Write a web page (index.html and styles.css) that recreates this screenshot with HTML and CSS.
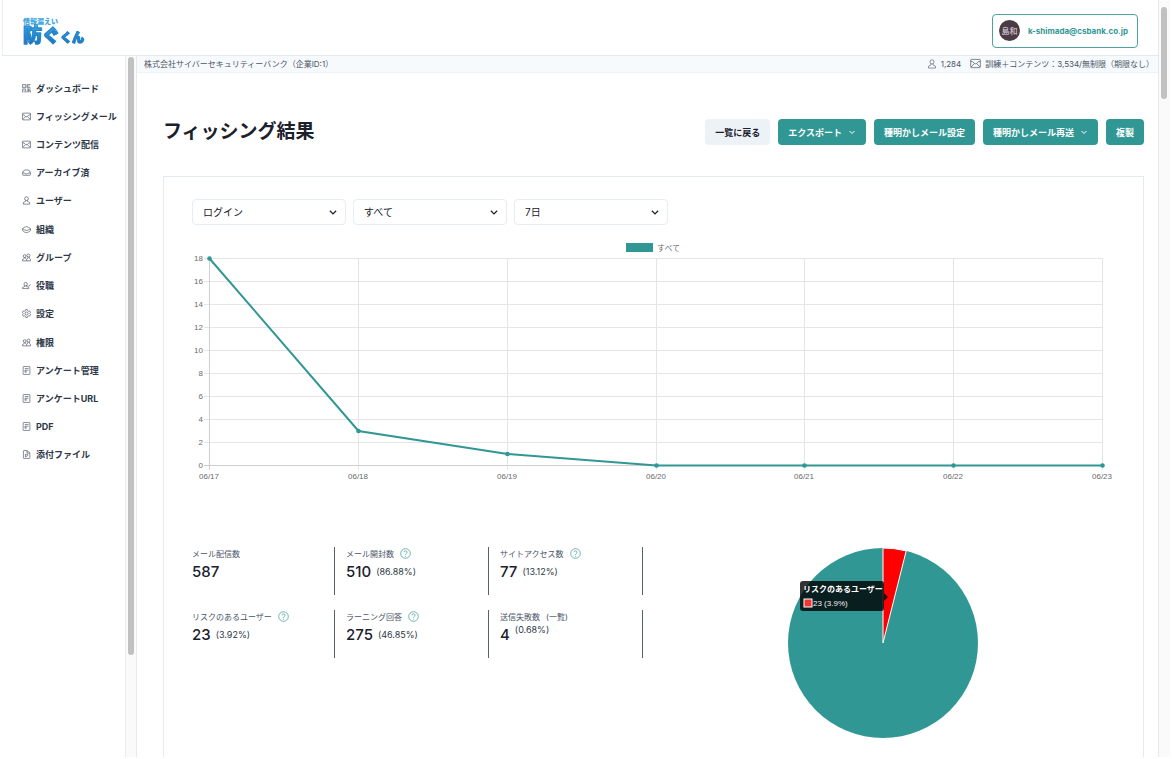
FILE: index.html
```html
<!DOCTYPE html>
<html lang="ja">
<head>
<meta charset="utf-8">
<title>フィッシング結果</title>
<link rel="stylesheet" href="styles.css">
</head>
<body>
<svg class="sprite" aria-hidden="true">
  <symbol id="i-qr" viewBox="0 0 16 16"><path d="M1 1h5.500v5.500H1zM9 6.500V1h6M9 6.500h6M9 3.700h4.500M3.500 3.500v1M1 15V9h5.500v6M3.800 11.500V15M9 15v-2.500M9 9h6M12 9v6M9 12h6M15 12v3"/></symbol>
  <symbol id="i-mail" viewBox="0 0 16 16"><rect x="1" y="2" width="14" height="12" rx="1"/><path d="M1 4.500Q4.500 5 6.500 8q1.500 1 3 0Q11.500 5 15 4.500M1.500 13L6.500 8M14.500 13L9.500 8"/></symbol>
  <symbol id="i-inbox" viewBox="0 0 16 16"><path d="M1 9Q1.500 4 5.500 3.500h5Q14.500 4 15 9v2.500q0 1.500-1.500 1.500h-11Q1 13 1 11.500zM1 9h4l1 1.500h4L11 9h4"/></symbol>
  <symbol id="i-user" viewBox="0 0 16 16"><circle cx="8" cy="4.700" r="3.300"/><path d="M6.300 7.800v1.700L2.500 11.500v3h11v-3L9.700 9.500V7.800"/></symbol>
  <symbol id="i-layers" viewBox="0 0 16 16"><path d="M1 6.500Q4.500 3 8 3t7 3.500Q11.500 9.500 8 9.500T1 6.500v3.500Q4.500 13.500 8 13.500t7-3.500V6.500"/></symbol>
  <symbol id="i-users" viewBox="0 0 16 16"><circle cx="4.800" cy="5.500" r="2.500"/><circle cx="11.500" cy="4.500" r="2.700"/><path d="M4 8v1.500L1 11.500V14h7.500v-2.500L6 9.500V8M10.500 7v2L8.500 11M8.500 14H15v-3L12.800 9V7"/></symbol>
  <symbol id="i-usercheck" viewBox="0 0 16 16"><circle cx="6.500" cy="5.500" r="3"/><path d="M5 8.200v1.300L1 11.500v2h11v-2L8 9.500V8.200M10.500 8l1.500 1.500L15 6"/></symbol>
  <symbol id="i-gear" viewBox="0 0 16 16"><path d="M6.500 1h3l.5 2 1.800 1 2-.6L15 6l-1.200 2L15 10l-1.200 2.600-2-.6-1.800 1-.5 2h-3L6 13l-1.800-1-2 .6L1 10l1.200-2L1 6l1.200-2.600 2 .6L6 3z"/><circle cx="8" cy="8" r="2.700"/></symbol>
  <symbol id="i-doc" viewBox="0 0 16 16"><rect x="2" y="1" width="12" height="14" rx="1"/><path d="M5 4.500h6.500M5 7.500h6.500M5.500 10.500H9M5.500 7.500V12"/></symbol>
  <symbol id="i-file" viewBox="0 0 16 16"><path d="M2.500 2q0-1 1-1H9l5 4.500V14q0 1-1 1h-9.500q-1 0-1-1zM9 1v4.500h5M6 13V7.500h3a1.800 1.800 0 0 1 0 3.500H6"/></symbol>
  <symbol id="i-down" viewBox="0 0 16 16"><path d="M3 6l5 5 5-5"/></symbol>
  <symbol id="i-help" viewBox="0 0 16 16"><circle cx="8" cy="8" r="7"/><path d="M5.800 6.300a2.200 2.200 0 1 1 3.200 2Q8 8.800 8 9.800M8 11.300v1.200"/></symbol>
</svg>

<div class="page">
  <div class="app">
    <header class="header">
      <a class="logo" href="#"><small>情報漏えい</small><span>防<b>ぐ</b><i>くん</i></span></a>
      <button class="account" type="button"><span class="avatar">島和</span>k-shimada@csbank.co.jp</button>
    </header>
    <div class="body">
      <aside class="sidebar">
        <nav class="nav">
          <a href="#"><svg class="icon"><use href="#i-qr"/></svg>ダッシュボード</a>
          <a href="#"><svg class="icon"><use href="#i-mail"/></svg>フィッシングメール</a>
          <a href="#"><svg class="icon"><use href="#i-mail"/></svg>コンテンツ配信</a>
          <a href="#"><svg class="icon"><use href="#i-inbox"/></svg>アーカイブ済</a>
          <a href="#"><svg class="icon"><use href="#i-user"/></svg>ユーザー</a>
          <a href="#"><svg class="icon"><use href="#i-layers"/></svg>組織</a>
          <a href="#"><svg class="icon"><use href="#i-users"/></svg>グループ</a>
          <a href="#"><svg class="icon"><use href="#i-usercheck"/></svg>役職</a>
          <a href="#"><svg class="icon"><use href="#i-gear"/></svg>設定</a>
          <a href="#"><svg class="icon"><use href="#i-users"/></svg>権限</a>
          <a href="#"><svg class="icon"><use href="#i-doc"/></svg>アンケート管理</a>
          <a href="#"><svg class="icon"><use href="#i-doc"/></svg>アンケートURL</a>
          <a href="#"><svg class="icon"><use href="#i-doc"/></svg>PDF</a>
          <a href="#"><svg class="icon"><use href="#i-file"/></svg>添付ファイル</a>
        </nav>
        <div class="track track-side"><div class="thumb"></div></div>
      </aside>
      <main class="main">
        <div class="infobar">
          <span>株式会社サイバーセキュリティーバンク（企業ID:1）</span>
          <div class="usage">
            <span><svg class="icon"><use href="#i-user"/></svg>1,284</span>
            <span><svg class="icon wide"><use href="#i-mail"/></svg>訓練＋コンテンツ：3,534/無制限（期限なし）</span>
          </div>
        </div>
        <div class="content">
          <div class="heading">
            <h1>フィッシング結果</h1>
            <div class="actions">
              <button class="btn plain" type="button">一覧に戻る</button>
              <button class="btn" type="button">エクスポート<svg class="icon"><use href="#i-down"/></svg></button>
              <button class="btn" type="button">種明かしメール設定</button>
              <button class="btn" type="button">種明かしメール再送<svg class="icon"><use href="#i-down"/></svg></button>
              <button class="btn" type="button">複製</button>
            </div>
          </div>
          <section class="card">
            <div class="filters">
              <div class="select"><select aria-label="イベント"><option>ログイン</option></select><svg class="icon"><use href="#i-down"/></svg></div>
              <div class="select"><select aria-label="対象"><option>すべて</option></select><svg class="icon"><use href="#i-down"/></svg></div>
              <div class="select"><select aria-label="期間"><option>7日</option></select><svg class="icon"><use href="#i-down"/></svg></div>
            </div>
            <svg class="line-chart" viewBox="0 0 923 245" role="img" aria-label="すべて">
              <rect class="teal" x="434" y="3" width="27" height="9"/>
              <text x="465" y="11">すべて</text>
              <path class="grid" d="M12 18.500H911M12 41.500H911M12 64.500H911M12 87.500H911M12 110.500H911M12 133.500H911M12 156.500H911M12 179.500H911M12 202.500H911M166.500 18V230M315.500 18V230M464.500 18V230M612.500 18V230M761.500 18V230M910.500 18V230"/>
              <path class="axis" d="M12 225.500H911M17.500 18V230"/>
              <g class="ticks-y">
                <text x="11" y="21">18</text><text x="11" y="44">16</text><text x="11" y="67">14</text><text x="11" y="90">12</text><text x="11" y="113">10</text><text x="11" y="136">8</text><text x="11" y="159">6</text><text x="11" y="182">4</text><text x="11" y="205">2</text><text x="11" y="228">0</text>
              </g>
              <g class="ticks-x">
                <text x="17" y="239">06/17</text><text x="166" y="239">06/18</text><text x="315" y="239">06/19</text><text x="464" y="239">06/20</text><text x="612" y="239">06/21</text><text x="761" y="239">06/22</text><text x="910" y="239">06/23</text>
              </g>
              <polyline class="series" points="17.500,18.500 166.500,191 315.500,214 464.500,225.500 612.500,225.500 761.500,225.500 910.500,225.500"/>
              <g class="teal"><circle cx="17.500" cy="18.500" r="2.300"/><circle cx="166.500" cy="191" r="2.300"/><circle cx="315.500" cy="214" r="2.300"/><circle cx="464.500" cy="225.500" r="2.300"/><circle cx="612.500" cy="225.500" r="2.300"/><circle cx="761.500" cy="225.500" r="2.300"/><circle cx="910.500" cy="225.500" r="2.300"/></g>
            </svg>
            <div class="results">
              <div class="stats">
                <div class="stat"><div class="name">メール配信数</div><div class="value">587</div></div>
                <div class="stat"><div class="name">メール開封数<svg class="icon help"><use href="#i-help"/></svg></div><div class="value">510<small>(86.88%)</small></div></div>
                <div class="stat"><div class="name">サイトアクセス数<svg class="icon help"><use href="#i-help"/></svg></div><div class="value">77<small>(13.12%)</small></div></div>
                <div class="stat"><div class="name">リスクのあるユーザー<svg class="icon help"><use href="#i-help"/></svg></div><div class="value">23<small>(3.92%)</small></div></div>
                <div class="stat"><div class="name">ラーニング回答<svg class="icon help"><use href="#i-help"/></svg></div><div class="value">275<small>(46.85%)</small></div></div>
                <div class="stat"><div class="name">送信失敗数<a href="#">(一覧)</a></div><div class="value top">4<small>(0.68%)</small></div></div>
              </div>
              <div class="pie">
                <svg width="192" height="192" viewBox="0 0 192 192" role="img" aria-label="リスクのあるユーザー 23 (3.9%)">
                  <circle class="teal" cx="96" cy="96" r="95"/>
                  <path class="risk" d="M96 96V1A95 95 0 0 1 119.200 3.900Z"/>
                  <path class="tip" d="M16 34H94Q97 34 97 37V46L101 50 97 54V61Q97 64 94 64H16Q13 64 13 61V37Q13 34 16 34Z"/>
                  <text class="tip-title" x="16" y="45">リスクのあるユーザー</text>
                  <rect class="tip-key" x="17" y="52" width="8" height="8"/>
                  <text class="tip-text" x="26" y="59">23 (3.9%)</text>
                </svg>
              </div>
            </div>
          </section>
        </div>
      </main>
    </div>
  </div>
  <div class="track track-page"><div class="thumb"></div></div>
</div>
</body>
</html>
```
FILE: styles.css
```css
* { box-sizing: border-box; }
body {
  margin: 0;
  background: #fff;
  color: #1a202c;
  font-family: Inter, "Noto Sans CJK JP", sans-serif;
  font-size: 9px;
}
a { color: inherit; text-decoration: none; }
button, select { font: inherit; color: inherit; }
.sprite { position: absolute; width: 0; height: 0; }
.icon { width: 10px; height: 10px; flex: none; fill: none; stroke: currentColor; stroke-width: 1; }

.page { display: flex; height: 100vh; padding: 0 2px 2px; overflow: hidden; }
.app { flex: 1; min-width: 0; display: flex; flex-direction: column; border-right: 1px solid #e6e9ec; }
.header {
  display: flex; align-items: center; justify-content: space-between;
  height: 56px; flex: none; padding: 6px 20px 0 20px;
  border-left: 1px solid #e8eef1; border-bottom: 1px solid #e2eaee;
}
.logo { display: flex; flex-direction: column; padding-top: 4px; font-weight: 900; color: #3fa6de; }
.logo small { font-size: 7px; line-height: 8px; }
.logo span {
  font-size: 19px; line-height: 20px;
  background: linear-gradient(#36a9e4, #1b62b4);
  -webkit-background-clip: text; background-clip: text;
  color: transparent; -webkit-text-stroke: 1px #2583cb;
}
.logo b { font-size: 18px; font-weight: 900; }
.logo i { font-size: 12px; font-style: normal; }
.account {
  display: flex; align-items: center; gap: 8px;
  height: 34px; padding: 0 9px 0 6px;
  border: 1px solid #4fa19f; border-radius: 4px; background: #fff;
  color: #319795; font-size: 8px; font-weight: 700;
}
.avatar {
  display: grid; place-items: center; width: 21px; height: 21px;
  border-radius: 50%; background: #4b3b45; color: #e2dce0; font-weight: 400;
}

.body { flex: 1; min-height: 0; display: flex; }
.sidebar { display: flex; width: 135px; flex: none; border-right: 1px solid #e6eaf0; }
.nav {
  flex: 1; display: grid; grid-auto-rows: 1fr;
  height: 395px; margin-top: 18px; padding-left: 20px;
  font-weight: 700; white-space: nowrap; color: #2d3748;
}
.nav a { display: flex; align-items: center; gap: 5px; }
.nav .icon { width: 9px; height: 9px; }
.track { background: #fafafa; border-left: 1px solid #ececec; flex: none; }
.track-side { width: 11px; padding: 1px 2px; }
.track-page { width: 11px; padding: 7px 2px; border: 0; }
.thumb { border-radius: 3px; background: #c1c1c1; width: 6px; }
.track-side .thumb { height: 598px; }
.track-page .thumb { height: 92px; }

.main { flex: 1; min-width: 0; overflow: hidden; }
.infobar {
  display: flex; align-items: center; justify-content: space-between;
  height: 17px; padding: 0 4px 1px 7px;
  background: #f7fafc; border-bottom: 1px solid #edf2f7;
  color: #4a5568; font-size: 8px;
}
.usage { display: flex; gap: 9px; }
.usage span { display: flex; align-items: center; gap: 4px; }
.usage .wide { width: 11px; height: 11px; }

.content { padding: 46px 14px 0 26px; }
.heading { display: flex; align-items: center; justify-content: space-between; height: 26px; margin-bottom: 31px; }
h1 { margin: 0; font-size: 19px; line-height: 26px; font-weight: 700; }
.actions { display: flex; gap: 8px; }
.btn {
  display: flex; align-items: center; gap: 6px; height: 26px; padding: 0 10px;
  border: 0; border-radius: 4px; background: #319795; color: #fff; font-weight: 700;
}
.btn.plain { background: #edf2f7; color: #1a202c; }
.btn .icon { width: 8px; height: 8px; stroke-width: 2; }

.card { height: 760px; padding: 22px 28px; border: 1px solid #e2ebf0; }
.filters { display: flex; gap: 7px; }
.select { position: relative; width: 154px; }
.select select {
  display: block; width: 100%; height: 26px; padding: 0 10px;
  appearance: none; border: 1px solid #e6edf3; border-radius: 4px; background: #fff; font-size: 10px;
}
.select .icon { position: absolute; right: 8px; top: 8px; stroke-width: 2; pointer-events: none; }

.line-chart { display: block; width: 100%; margin-top: 15px; }
.line-chart text { font: 8px "Liberation Sans", "Noto Sans CJK JP", sans-serif; fill: #6b6b6b; }
.teal { fill: #319795; }
.grid { fill: none; stroke: #e5e5e5; }
.axis { fill: none; stroke: #cfcfcf; }
.ticks-y text { text-anchor: end; }
.ticks-x text { text-anchor: middle; }
.series { fill: none; stroke: #319795; stroke-width: 2; }

.results { display: flex; align-items: flex-start; gap: 8px; margin: 62px 0 0 -11px; }
.stats { display: grid; grid-template-columns: repeat(3, 154px); row-gap: 15px; }
.stat { height: 48px; padding-left: 11px; border-right: 1px solid #566069; }
.name { display: flex; align-items: center; gap: 6px; height: 12px; color: #4a5568; font-size: 8px; }
.help { width: 11px; height: 11px; color: #319795; }
.value { display: flex; align-items: center; gap: 5px; height: 24px; font-size: 15px; font-weight: 500; }
.value small { color: #2d3748; font-size: 9px; font-weight: 400; }
.value.top small { line-height: 16px; align-self: flex-start; }
.pie { flex: 1; display: flex; justify-content: center; }
.risk { fill: #f00; stroke: #fff; stroke-width: 1; }
.tip { fill: #000; fill-opacity: .8; }
.tip-title { fill: #fff; font: 700 8px "Liberation Sans", "Noto Sans CJK JP", sans-serif; }
.tip-text { fill: #eee; font: 8px "Liberation Sans", sans-serif; }
.tip-key { fill: #f03535; stroke: #fff; }
```
